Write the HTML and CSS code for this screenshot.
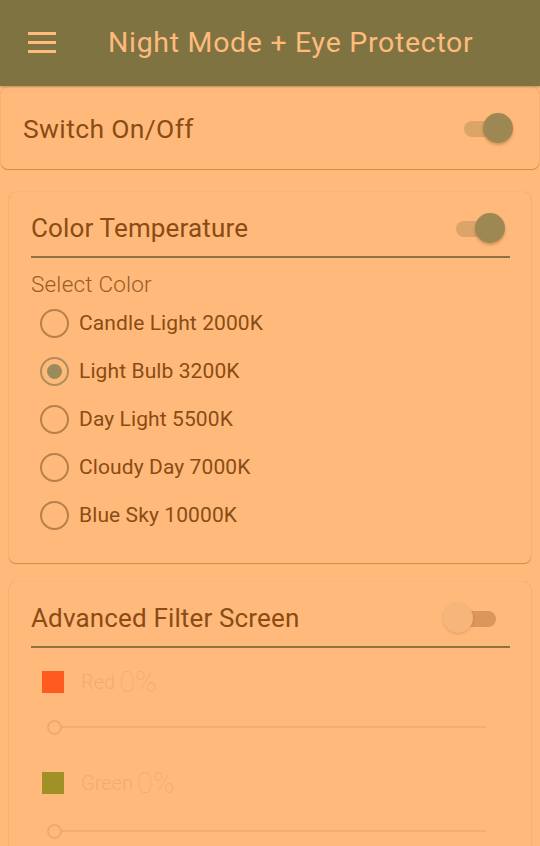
FILE: index.html
```html
<!DOCTYPE html>
<html>
<head>
<meta charset="utf-8">
<link rel="stylesheet" href="styles.css">
</head>
<body>
<header class="appbar">
  <div class="menu"><span></span><span></span><span></span></div>
  <h1 class="title">Night Mode + Eye Protector</h1>
</header>
<main class="content">
  <section class="card card-main">
    <div class="row">
      <span class="main-label">Switch On/Off</span>
      <div class="toggle on"><div class="track"></div><div class="thumb"></div></div>
    </div>
  </section>

  <section class="card card-inset">
    <div class="row head">
      <span class="section-title">Color Temperature</span>
      <div class="toggle on"><div class="track"></div><div class="thumb"></div></div>
    </div>
    <div class="divider"></div>
    <div class="sub">Select Color</div>
    <ul class="radios">
      <li><span class="radio"></span>Candle Light 2000K</li>
      <li><span class="radio checked"></span>Light Bulb 3200K</li>
      <li><span class="radio"></span>Day Light 5500K</li>
      <li><span class="radio"></span>Cloudy Day 7000K</li>
      <li><span class="radio"></span>Blue Sky 10000K</li>
    </ul>
  </section>

  <section class="card card-inset card-last">
    <div class="row head">
      <span class="section-title">Advanced Filter Screen</span>
      <div class="toggle off"><div class="track"></div><div class="thumb"></div></div>
    </div>
    <div class="divider"></div>
    <div class="channel">
      <div class="chan-head"><span class="swatch red"></span><span class="chan-name">Red</span><span class="chan-val">0%</span></div>
      <div class="slider"><span class="knob"></span><span class="line"></span></div>
    </div>
    <div class="channel">
      <div class="chan-head"><span class="swatch green"></span><span class="chan-name">Green</span><span class="chan-val">0%</span></div>
      <div class="slider slider-low"><span class="knob"></span><span class="line"></span></div>
    </div>
  </section>
</main>
</body>
</html>
```
FILE: styles.css
```css
* { box-sizing: border-box; }
html, body {
  margin: 0;
  padding: 0;
  background: #ffba7b;
  font-family: Roboto, "Noto Sans", "Liberation Sans", sans-serif;
  width: 540px;
  height: 846px;
  overflow: hidden;
}
.appbar {
  height: 86px;
  background: #807342;
  display: flex;
  align-items: center;
  padding-left: 28px;
  box-shadow: 0 1px 2px rgba(90, 60, 20, 0.35);
  position: relative;
  z-index: 1;
}
.menu {
  width: 28px;
  display: flex;
  flex-direction: column;
  gap: 6px;
  margin-top: -1px;
}
.menu span {
  display: block;
  height: 3px;
  background: #ffbb7c;
}
.title {
  margin: -2px 0 0 52px;
  font-size: 28.5px;
  font-weight: 400;
  color: #ffbb7c;
  letter-spacing: 0.7px;
}
.content {
  display: flex;
  flex-direction: column;
  padding-top: 1px;
}
.card {
  background: #ffba7b;
  border-radius: 7px;
  box-shadow: 0 1px 1px rgba(160, 80, 10, 0.45), 0 0 1px rgba(160, 80, 10, 0.35);
}
.card-main {
  margin: 0 1px 0 1px;
  height: 82px;
  padding: 0 28px 0 22px;
  display: flex;
  align-items: center;
}
.card-inset {
  margin: 23px 9px 0 9px;
  padding: 16px 21px 24px 22px;
}
.card-last {
  margin-top: 19px;
  padding-bottom: 60px;
}
.row {
  display: flex;
  align-items: center;
  justify-content: space-between;
  width: 100%;
}
.head { height: 40px; }
.main-label {
  font-size: 26.5px;
  letter-spacing: 0.35px;
  color: #8a4c14;
}
.section-title {
  font-size: 26px;
  letter-spacing: 0.15px;
  color: #8a4c14;
}
.toggle {
  position: relative;
  width: 50px;
  height: 32px;
}
.toggle .track {
  position: absolute;
  left: 1px;
  top: 9px;
  width: 42px;
  height: 16px;
  border-radius: 8px;
  background: #dba56a;
}
.toggle .thumb {
  position: absolute;
  top: 1px;
  width: 30px;
  height: 30px;
  border-radius: 50%;
  background: #9d8753;
  box-shadow: 0 2px 3px rgba(120, 70, 20, 0.35);
}
.toggle.on .thumb { left: 20px; }
.toggle.off .track { background: #da965b; left: 8px; }
.toggle.off .thumb { left: 0; background: #f5b57b; box-shadow: 0 1px 3px rgba(160, 90, 30, 0.3); }
.card-main .toggle.on { margin-right: -2px; }
.card-inset .toggle.on { margin-right: 5px; }
.card-inset .toggle.off { margin-right: 14px; }
.card-inset .toggle.off .thumb { left: -3px; }
.divider {
  height: 2px;
  background: #8d7142;
  margin-top: 8px;
}
.sub {
  margin-top: 13px;
  font-size: 22.5px;
  letter-spacing: 0.2px;
  font-weight: 300;
  color: #9b5a22;
  line-height: 26px;
}
.radios {
  list-style: none;
  margin: 2px 0 0 0;
  padding: 0;
}
.radios li {
  height: 48px;
  display: flex;
  align-items: center;
  font-size: 21px;
  letter-spacing: 0.1px;
  color: #8a4c14;
  padding-left: 9px;
}
.radio {
  width: 29px;
  height: 29px;
  border-radius: 50%;
  border: 2.5px solid #b8814a;
  margin-right: 10px;
  display: flex;
  align-items: center;
  justify-content: center;
  flex: none;
}
.radio.checked { border-color: #ad8e5c; }
.radio.checked::after {
  content: "";
  width: 15px;
  height: 15px;
  border-radius: 50%;
  background: #9b8a5c;
}
.channel { margin-top: 22px; }
.channel + .channel { margin-top: 36px; }
.chan-head {
  display: flex;
  align-items: center;
  height: 24px;
  padding-left: 11px;
}
.swatch {
  width: 22px;
  height: 22px;
  flex: none;
}
.swatch.red { background: #ff5a1f; }
.swatch.green { background: #a09127; }
.chan-name {
  margin-left: 17px;
  font-size: 20px;
  font-weight: 300;
  color: #f2ab6e;
}
.chan-val {
  margin-left: 4px;
  font-size: 29px;
  font-weight: 100;
  color: #f2ab6e;
}
.slider {
  margin-top: 25px;
  display: flex;
  align-items: center;
  padding-left: 16px;
  padding-right: 24px;
  height: 16px;
}
.slider-low { margin-top: 28px; }
.knob {
  width: 15px;
  height: 15px;
  border-radius: 50%;
  border: 2px solid #f0a96b;
  flex: none;
}
.line {
  flex: 1;
  height: 1.5px;
  background: #f3ad70;
}
```
